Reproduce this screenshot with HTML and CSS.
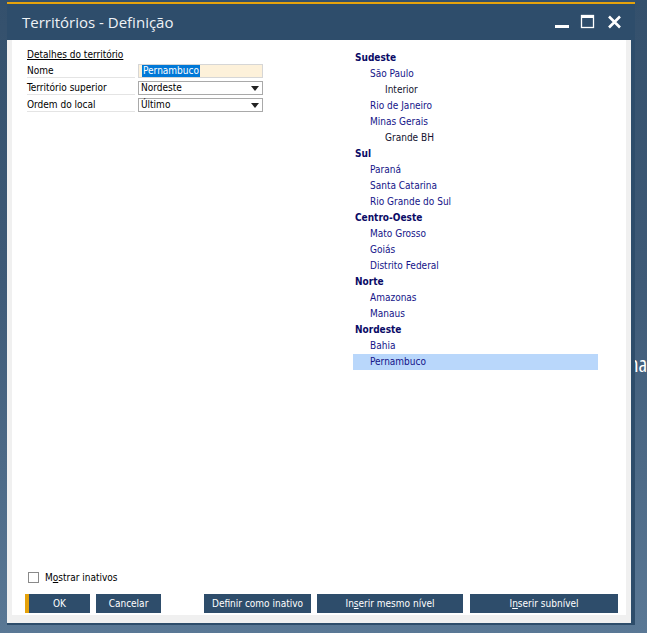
FILE: index.html
```html
<!DOCTYPE html>
<html lang="pt">
<head>
<meta charset="utf-8">
<title>Territórios - Definição</title>
<link rel="stylesheet" href="styles.css">
</head>
<body>
<span class="behind">na</span>
<div class="window">
  <div class="titlebar">
    <span class="title">Territórios - Definição</span>
    <div class="controls">
      <svg class="ctl" width="16" height="16" viewBox="0 0 16 16"><rect x="1" y="11" width="14" height="3" fill="#fff"/></svg>
      <svg class="ctl" width="16" height="16" viewBox="0 0 16 16"><rect x="1.5" y="1.5" width="12" height="12" fill="none" stroke="#fff" stroke-width="1.3"/><rect x="1" y="1" width="13" height="3" fill="#fff"/></svg>
      <svg class="ctl" width="16" height="16" viewBox="0 0 16 16"><path d="M3 2.5 L14 13.5 M14 2.5 L3 13.5" stroke="#fff" stroke-width="2.6"/></svg>
    </div>
  </div>
  <div class="client">
    <div class="panel">
      <div class="main">
        <div class="form">
          <div class="section">Detalhes do território</div>
          <div class="grid">
            <div class="label">Nome</div>
            <div class="field input"><span class="sel">Pernambuco</span></div>
            <div class="label">Território superior</div>
            <div class="field select"><span>Nordeste</span><span class="arrow"></span></div>
            <div class="label">Ordem do local</div>
            <div class="field select"><span>Último</span><span class="arrow"></span></div>
          </div>
        </div>
        <ul class="tree">
          <li class="l0">Sudeste</li>
          <li class="l1">São Paulo</li>
          <li class="l2">Interior</li>
          <li class="l1">Rio de Janeiro</li>
          <li class="l1">Minas Gerais</li>
          <li class="l2">Grande BH</li>
          <li class="l0">Sul</li>
          <li class="l1">Paraná</li>
          <li class="l1">Santa Catarina</li>
          <li class="l1">Rio Grande do Sul</li>
          <li class="l0">Centro-Oeste</li>
          <li class="l1">Mato Grosso</li>
          <li class="l1">Goiás</li>
          <li class="l1">Distrito Federal</li>
          <li class="l0">Norte</li>
          <li class="l1">Amazonas</li>
          <li class="l1">Manaus</li>
          <li class="l0">Nordeste</li>
          <li class="l1">Bahia</li>
          <li class="l1 selected">Pernambuco</li>
        </ul>
      </div>
      <label class="check"><span class="box"></span>M<u>o</u>strar inativos</label>
      <div class="buttons">
        <button class="btn ok">OK</button>
        <button class="btn cancel">Cancelar</button>
        <button class="btn inactive">Definir como inativo</button>
        <button class="btn same">In<u>s</u>erir mesmo nível</button>
        <button class="btn sub">I<u>n</u>serir subnível</button>
      </div>
    </div>
  </div>
</div>
</body>
</html>
```
FILE: styles.css
```css
html, body {
  margin: 0;
  padding: 0;
}
body {
  width: 647px;
  height: 633px;
  overflow: hidden;
  background: linear-gradient(180deg, #34506c 0%, #3e5a77 45%, #5a7895 100%);
  font-family: "DejaVu Sans Condensed", "DejaVu Sans", sans-serif;
  font-stretch: condensed;
  font-size: 10px;
  color: #000;
}
.behind {
  position: absolute;
  left: 629px;
  top: 350px;
  font-family: "Open Sans", sans-serif;
  font-size: 21px;
  color: #fff;
}
.window {
  position: relative;
  margin: 2px 0 0 7px;
  width: 628px;
  height: 623px;
  box-sizing: border-box;
  background: #2e4d6b;
  border-top: 2px solid #e5a20b;
  display: flex;
  flex-direction: column;
}
.titlebar {
  height: 36px;
  display: flex;
  align-items: center;
  padding: 0 13px 0 15px;
  flex: none;
}
.title {
  font-family: "Open Sans", sans-serif;
  font-stretch: normal;
  font-size: 15px;
  color: #eef2f6;
  flex: 1;
  padding-bottom: 1px;
}
.controls {
  display: flex;
  gap: 10px;
  align-items: center;
}
.ctl {
  display: block;
}
.client {
  flex: 1;
  background: #f0f0f0;
  margin: 0 4px 2px 0;
  padding: 0 5px 8px 5px;
  display: flex;
}
.panel {
  flex: 1;
  background: #fff;
  display: flex;
  flex-direction: column;
  padding: 0 8px 2px 13px;
}
.main {
  flex: 1;
  display: flex;
}
.form {
  width: 251px;
  padding: 7px 0 0 2px;
}
.section {
  height: 16px;
  line-height: 16px;
  text-decoration: underline;
  margin-bottom: 1px;
}
.grid {
  display: grid;
  grid-template-columns: 108px 125px;
  column-gap: 3px;
  row-gap: 3px;
  grid-auto-rows: 14px;
}
.label {
  line-height: 13px;
  border-bottom: 1px solid #e4e4e4;
  white-space: nowrap;
}
.field {
  box-sizing: border-box;
  border: 1px solid #c8c8c8;
  display: flex;
  align-items: center;
  padding: 0 0 0 2px;
  line-height: 12px;
}
.input {
  background: #fdf1da;
  border-color: #d6d6d6;
}
.sel {
  background: #0078d7;
  color: #fff;
  padding: 0 1px;
  margin-left: 1px;
  height: 12px;
}
.select {
  background: #fff;
  border-color: #a9a9a9;
  justify-content: space-between;
}
.arrow {
  width: 0;
  height: 0;
  border-left: 4px solid transparent;
  border-right: 4px solid transparent;
  border-top: 5px solid #222;
  margin-right: 3px;
}
.tree {
  list-style: none;
  margin: 10px 0 0 75px;
  padding: 0;
  width: 245px;
}
.tree li {
  height: 16px;
  line-height: 16px;
  white-space: nowrap;
}
.l0 {
  padding-left: 2px;
  font-weight: bold;
  color: #0a0a66;
}
.l1 {
  padding-left: 17px;
  color: #141488;
}
.l2 {
  padding-left: 32px;
  color: #12122e;
}
.selected {
  background: #b9d7fb;
}
.check {
  display: flex;
  align-items: center;
  height: 13px;
  margin: 0 0 10px 3px;
}
.box {
  width: 11px;
  height: 11px;
  box-sizing: border-box;
  border: 1px solid #8a8a8a;
  background: #fff;
  margin-right: 6px;
}
.buttons {
  display: flex;
  height: 19px;
  margin-left: 0;
}
.btn {
  font: inherit;
  font-stretch: condensed;
  color: #fff;
  background: #2e4d6b;
  border: none;
  padding: 0;
  height: 19px;
  margin: 0;
}
.ok {
  width: 65px;
  border-left: 4px solid #e5a20b;
  margin-right: 6px;
}
.cancel {
  width: 65px;
  margin-right: 43px;
}
.inactive {
  width: 107px;
  margin-right: 6px;
}
.same {
  width: 146px;
  margin-right: 7px;
}
.sub {
  width: 148px;
}
```
